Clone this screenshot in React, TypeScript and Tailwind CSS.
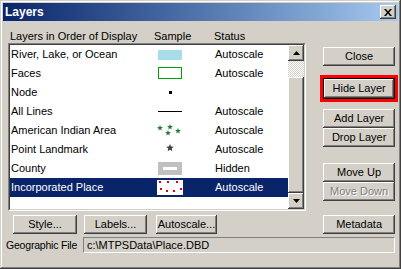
import type { ReactNode } from "react";

const bevel =
  "bg-[#d4d0c8] shadow-[inset_-1px_-1px_#404040,inset_1px_1px_#fff,inset_-2px_-2px_#808080,inset_2px_2px_#d4d0c8]";

function WinButton({
  children,
  className = "",
  disabled = false,
}: {
  children: ReactNode;
  className?: string;
  disabled?: boolean;
}) {
  return (
    <div
      className={`${bevel} flex items-center justify-center leading-none whitespace-nowrap ${
        disabled ? "text-[#808080] [text-shadow:1px_1px_#fff]" : "text-black"
      } ${className}`}
    >
      {children}
    </div>
  );
}

function Star({ x, y, r, fill }: { x: number; y: number; r: number; fill: string }) {
  const pts: string[] = [];
  for (let i = 0; i < 10; i++) {
    const a = (Math.PI / 5) * i - Math.PI / 2;
    const rr = i % 2 === 0 ? r : r * 0.45;
    pts.push(`${x + rr * Math.cos(a)},${y + rr * Math.sin(a)}`);
  }
  return <polygon points={pts.join(" ")} fill={fill} />;
}

type Layer = { name: string; status: string; sample: ReactNode };

const layers: Layer[] = [
  {
    name: "River, Lake, or Ocean",
    status: "Autoscale",
    sample: <rect x="2" y="5" width="24" height="10" fill="#a8dce8" />,
  },
  {
    name: "Faces",
    status: "Autoscale",
    sample: <rect x="2.5" y="3.5" width="23" height="11" fill="#fff" stroke="#00a000" />,
  },
  {
    name: "Node",
    status: "",
    sample: <rect x="13" y="8" width="3" height="3" fill="#000" />,
  },
  {
    name: "All Lines",
    status: "Autoscale",
    sample: <rect x="2" y="9" width="24" height="1" fill="#000" />,
  },
  {
    name: "American Indian Area",
    status: "Autoscale",
    sample: (
      <g>
        <Star x={4} y={7} r={3} fill="#1f7a3a" />
        <Star x={14} y={6} r={3} fill="#1f7a3a" />
        <Star x={22} y={10} r={3} fill="#1f7a3a" />
        <Star x={12} y={12} r={3} fill="#1f7a3a" />
      </g>
    ),
  },
  {
    name: "Point Landmark",
    status: "Autoscale",
    sample: <Star x={14} y={8} r={4} fill="#404040" />,
  },
  {
    name: "County",
    status: "Hidden",
    sample: (
      <g>
        <rect x="2" y="3" width="24" height="13" fill="#c0c0c0" />
        <rect x="7" y="8" width="14" height="3" fill="#fff" />
      </g>
    ),
  },
  {
    name: "Incorporated Place",
    status: "Autoscale",
    sample: (
      <g>
        <rect x="1" y="2" width="26" height="15" fill="#fff" />
        {[
          [4, 4],
          [12, 4],
          [21, 4],
          [5, 11],
          [11, 13],
          [18, 13],
          [25, 11],
        ].map(([cx, cy], i) => (
          <rect key={i} x={cx - 1} y={cy - 1} width="2" height="2" fill="#e00000" />
        ))}
      </g>
    ),
  },
];

export default function App() {
  return (
    <div className="w-[401px] h-[269px] bg-[#d4d0c8] p-[3px] font-['Liberation_Sans',Arial,sans-serif] text-[11px] text-black shadow-[inset_-1px_-1px_#404040,inset_1px_1px_#d4d0c8,inset_-2px_-2px_#808080,inset_2px_2px_#fff] overflow-hidden">
      {/* title bar */}
      <div className="h-[18px] flex items-center justify-between bg-linear-to-r from-[#0a246a] to-[#a6caf0] pl-[2px] pr-[2px]">
        <span className="text-white font-bold text-[12px] leading-none">Layers</span>
        <div className={`${bevel} w-[16px] h-[14px] flex items-center justify-center`}>
          <svg width="8" height="7" viewBox="0 0 8 7">
            <path d="M0 0h2l2 2.5L6 0h2L5 3.5 8 7H6L4 4.5 2 7H0l3-3.5z" fill="#000" />
          </svg>
        </div>
      </div>

      <div className="flex pl-[5px] pt-[8px]">
        {/* left column */}
        <div className="w-[299px] flex flex-col">
          <div className="h-[14px] flex items-center leading-none">
            <span className="w-[146px] pl-[2px]">Layers in Order of Display</span>
            <span className="w-[60px]">Sample</span>
            <span>Status</span>
          </div>
          <div className="h-[168px] border border-t-[#808080] border-l-[#808080] border-r-white border-b-white">
            <div className="h-full border border-t-[#404040] border-l-[#404040] border-r-[#d4d0c8] border-b-[#d4d0c8] flex">
              <div className="flex-1 bg-white">
                {layers.map((l, i) => {
                  const sel = i === layers.length - 1;
                  return (
                    <div
                      key={l.name}
                      className={`h-[19px] flex items-center leading-none ${
                        sel ? "bg-[#0a246a] text-white" : ""
                      }`}
                    >
                      <span className="w-[146px] pl-[1px]">{l.name}</span>
                      <svg width="28" height="19" viewBox="0 0 28 19">
                        {l.sample}
                      </svg>
                      <span className="ml-[31px]">{l.status}</span>
                    </div>
                  );
                })}
              </div>
              <div className="w-[16px] flex flex-col">
                <div className={`${bevel} h-[16px] flex items-center justify-center`}>
                  <svg width="7" height="4" viewBox="0 0 7 4">
                    <path d="M3.5 0L7 4H0z" fill="#000" />
                  </svg>
                </div>
                <div className="h-[16px] bg-[repeating-conic-gradient(#d4d0c8_0%_25%,#fff_0%_50%)] bg-size-[2px_2px]" />
                <div className={`${bevel} flex-1`} />
                <div className={`${bevel} h-[16px] flex items-center justify-center`}>
                  <svg width="7" height="4" viewBox="0 0 7 4">
                    <path d="M0 0h7L3.5 4z" fill="#000" />
                  </svg>
                </div>
              </div>
            </div>
          </div>
          <div className="flex mt-[4px] ml-[5px]">
            <WinButton className="w-[64px] h-[19px]">Style...</WinButton>
            <WinButton className="w-[63px] h-[19px] ml-[7px]">Labels...</WinButton>
            <WinButton className="w-[61px] h-[19px] ml-[9px]">Autoscale...</WinButton>
          </div>
        </div>

        {/* right column */}
        <div className="w-[78px] ml-[14px] flex flex-col">
          <WinButton className="mx-[3px] h-[19px] mt-[18px]">Close</WinButton>
          <div className="mt-[9px] border-[3px] border-[#ff0000]">
            <div className="border border-black">
              <WinButton className="h-[19px]">Hide Layer</WinButton>
            </div>
          </div>
          <WinButton className="mx-[3px] h-[19px] mt-[7px]">Add Layer</WinButton>
          <WinButton className="mx-[3px] h-[19px]">Drop Layer</WinButton>
          <WinButton className="mx-[3px] h-[19px] mt-[16px]">Move Up</WinButton>
          <WinButton className="mx-[3px] h-[19px]" disabled>
            Move Down
          </WinButton>
          <WinButton className="mx-[3px] h-[19px] mt-[14px]">Metadata</WinButton>
        </div>
      </div>

      <div className="flex items-center mt-[3px] pl-[3px]">
        <span className="w-[77px] shrink-0 whitespace-nowrap leading-none text-[10.5px] tracking-[-0.2px]">
          Geographic File
        </span>
        <div className="w-[312px] h-[16px] border border-t-[#808080] border-l-[#808080] border-r-white border-b-white flex items-center pl-[3px] leading-none">
          c:\MTPSData\Place.DBD
        </div>
      </div>
    </div>
  );
}
